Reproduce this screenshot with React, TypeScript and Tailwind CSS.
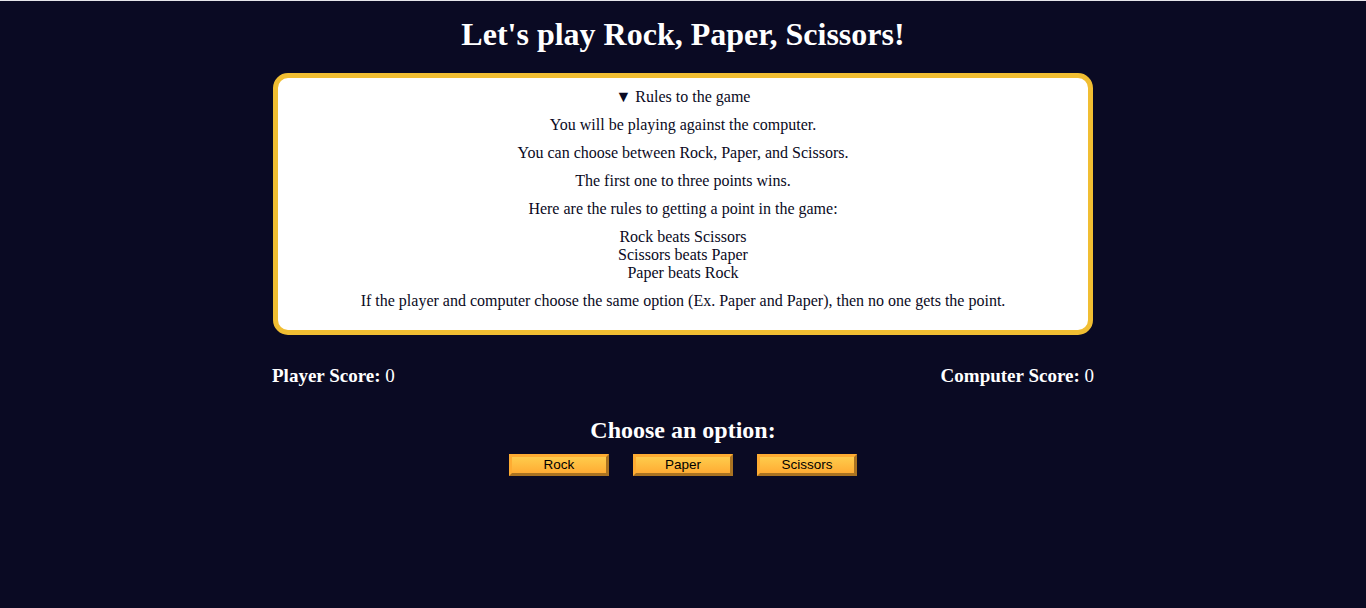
import React from "react";

const serif = { fontFamily: '"Liberation Serif", "Times New Roman", serif' };

function Btn({ label }: { label: string }) {
  return (
    <button
      className="w-[100px] h-[22px] border-[3px] [border-style:outset] border-[#feac32] bg-[#feac32] bg-gradient-to-b from-[#fecc4c] to-[#ffac33] text-[13.5px] leading-[14px] text-black p-0"
      style={{ fontFamily: '"Liberation Sans", Arial, sans-serif' }}
    >
      {label}
    </button>
  );
}

export default function App() {
  return (
    <div className="min-h-[608px] bg-[#0a0a23] border-t border-[#e6e6ea] text-white" style={serif}>
      <h1 className="text-[32px] font-bold leading-[37px] text-center pt-[15px]">
        Let's play Rock, Paper, Scissors!
      </h1>
      <div className="w-[820px] mx-auto mt-[20px] bg-white border-[5px] border-[#f1be32] rounded-[15px] text-[#0a0a23] text-center text-[16px] leading-[18px] pt-[10px] pb-[20px]">
        <div>▼ Rules to the game</div>
        <p className="mt-[10px]">You will be playing against the computer.</p>
        <p className="mt-[10px]">You can choose between Rock, Paper, and Scissors.</p>
        <p className="mt-[10px]">The first one to three points wins.</p>
        <p className="mt-[10px]">Here are the rules to getting a point in the game:</p>
        <div className="mt-[10px]">
          <div>Rock beats Scissors</div>
          <div>Scissors beats Paper</div>
          <div>Paper beats Rock</div>
        </div>
        <p className="mt-[10px]">
          If the player and computer choose the same option (Ex. Paper and Paper), then no one gets the point.
        </p>
      </div>
      <div className="w-[822px] mx-auto flex justify-between mt-[30px] text-[19px] leading-[22px]">
        <div>
          <strong>Player Score:</strong> 0
        </div>
        <div>
          <strong>Computer Score:</strong> 0
        </div>
      </div>
      <h2 className="text-[24px] font-bold leading-[28px] text-center mt-[29px]">Choose an option:</h2>
      <div className="flex justify-center gap-[24px] mt-[10px]">
        <Btn label="Rock" />
        <Btn label="Paper" />
        <Btn label="Scissors" />
      </div>
    </div>
  );
}
